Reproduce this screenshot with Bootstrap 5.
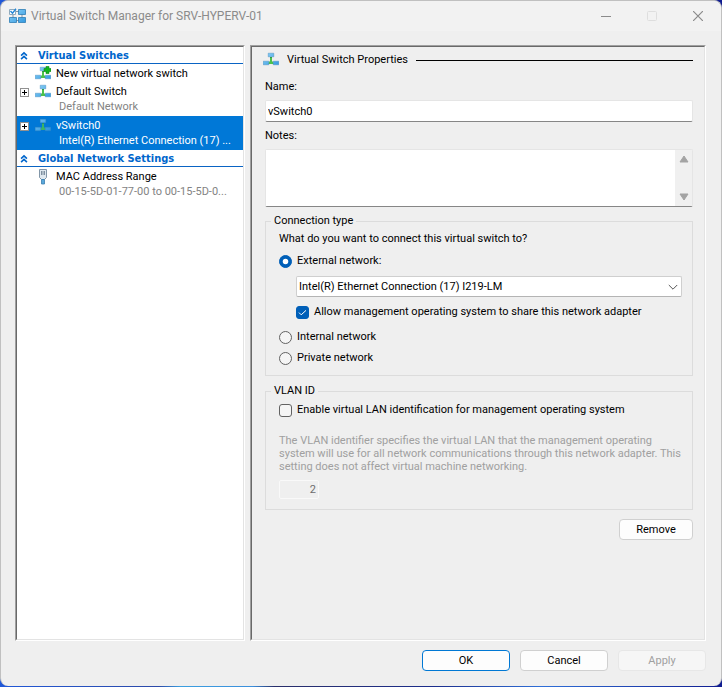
<!DOCTYPE html>
<html lang="en">
<head>
<meta charset="utf-8">
<meta name="viewport" content="width=device-width, initial-scale=1">
<title>Virtual Switch Manager for SRV-HYPERV-01</title>
<link href="https://cdn.jsdelivr.net/npm/bootstrap@5.3.0/dist/css/bootstrap.min.css" rel="stylesheet">
<style>
  body { font-family: Roboto, "Open Sans", sans-serif; font-size: 11px; line-height: 14px; color: #000; background: linear-gradient(90deg, #2058d8, #2d4aa8 22%, #3b9fe0 25%, #3b8fdc 35%, #2a2f6a 38%, #1c2d8c 60%, #2f6fd8 75%, #101c90); }
  .dialog { background: #efefef; border: 1px solid #c0c0c0; border-bottom: 0; border-radius: 8px; margin-bottom: 1px; min-height: calc(100vh - 1px); overflow: hidden; }
  .titlebar { height: 30px; background: #f2f2f2; padding-left: 8px; }
  .titlebar h1 { font: 12px/16px Roboto, "Noto Sans", sans-serif; color: #8b8b8b; margin-left: 5px; }
  .caption-btn { width: 46px; height: 28px; background: none; }
  .work { padding: 14px 15px 0 14px; gap: 5px; }
  .sunken { border: 1px solid; border-color: #a0a0a0 #fff #fff #a0a0a0; }
  .sunken > div { border: 1px solid; border-color: #696969 #e3e3e3 #e3e3e3 #696969; }
  .side { flex: 0 0 230px; min-width: 0; }
  .side > div { background: #fff; }
  .section-head { height: 17px; border-bottom: 1px solid #0a64c4; color: #0066cc; font-family: "DejaVu Sans Condensed", "Noto Sans", sans-serif; font-size: 11px; line-height: 14px; font-weight: 700; padding: 2px 0 0 3px; }
  .section-head svg { margin-right: 10px; }
  .node { padding: 2px 4px 0 3px; }
  .node-line { height: 16px; line-height: 16px; }
  .node-sub { color: #838383; padding: 0 0 0 39px; height: 16px; line-height: 14px; }
  .node.is-current { background: #0078d7; color: #fff; }
  .node.is-current .node-sub { color: #fff; }
  .expander { width: 9px; height: 9px; border: 1px solid #919191; background: #fff; }
  .expander-slot { width: 15px; flex: none; }
  .node-line > svg { flex: none; margin-right: 5px; }
  .props { padding: 0 11px 12px 13px; }
  .props-head { height: 26px; gap: 8px; }
  .props-head svg { margin-left: -2px; }
  .props-head h2 { font-size: 11px; line-height: 14px; }
  .rule { border-top: 1px solid #000; }
  .field-label { margin: 7px 0 6px; }
  .edit { font-size: inherit; line-height: 14px; border: 1px solid #e5e5e5; border-bottom-color: #868686; border-radius: 2px; background: #fff; color: #000; }
  input.edit { height: 22px; padding: 2px; }
  .memo { height: 58px; }
  .memo textarea { resize: none; outline: 0; padding: 2px; overflow: hidden; }
  .memo-scroll { width: 17px; background: #f0f0f0; padding: 5px 0; }
  .groupbox { border: 1px solid #dcdcdc; padding: 0 10px 10px 13px; margin-top: 7px; }
  .groupbox + .groupbox { margin-top: 8px; }
  .groupbox legend { float: none; width: auto; font-size: 11px; line-height: 14px; padding: 0 3px; margin: 0 0 0 -8px; }
  .opt { min-height: 14px; padding: 0; margin: 0; gap: 5px; }
  .opt .form-check-input { width: 13px; height: 13px; margin: 0; float: none; border-color: #626262; background-color: #f5f5f5; flex: none; }
  .opt .form-check-input[type=checkbox] { border-radius: 3px; }
  .opt .form-check-input:checked { background-color: #005fb8; border-color: #005fb8; }
  .opt .form-check-input[type=checkbox]:checked { background-size: 11px; background-image: url("data:image/svg+xml,%3csvg xmlns='http://www.w3.org/2000/svg' viewBox='0 0 11 11'%3e%3cpath d='M2 5.6l2.2 2.2L9 3.4' fill='none' stroke='white'/%3e%3c/svg%3e"); }
  .stack-lg { margin-top: 11px; }
  .stack-md { margin-top: 8px; }
  .stack-sm { margin-top: 7px; }
  .nested { margin-left: 17px; }
  .adapter { font-size: inherit; line-height: 14px; height: 21px; padding: 2px 20px 2px 2px; color: #000; border: 1px solid #cfcfcf; border-bottom-color: #b4b4b4; border-radius: 2px; background: #fff url("data:image/svg+xml,%3csvg xmlns='http://www.w3.org/2000/svg' viewBox='0 0 10 10'%3e%3cpath d='M.8 3l4.2 4.2L9.2 3' fill='none' stroke='%23555'/%3e%3c/svg%3e") no-repeat right 3px center / 10px 10px; }
  .vlan-opt { margin-top: 5px; }
  .hint { color: #a0a0a0; line-height: 13px; max-width: 403px; margin: 17px 0 7px; }
  input.vlan { width: 40px; height: 19px; border-color: #f9f9f9; background: #efefef; color: #6d6d6d; text-align: right; }
  .push { --bs-btn-font-size: 11px; --bs-btn-line-height: 14px; --bs-btn-padding-x: 0; --bs-btn-padding-y: 2px; --bs-btn-border-radius: 4px; --bs-btn-color: #000; --bs-btn-bg: #fdfdfd; --bs-btn-border-color: #d0d0d0; --bs-btn-hover-bg: #e5f1fb; --bs-btn-hover-color: #000; --bs-btn-disabled-color: #a0a0a0; --bs-btn-disabled-bg: #f6f6f6; --bs-btn-disabled-border-color: #e7e7e7; --bs-btn-disabled-opacity: 1; width: 88px; height: 21px; }
  .push.is-default { --bs-btn-border-color: #0078d4; }
  .push.remove { width: 74px; margin-top: 9px; }
  .actions { padding: 9px 15px 15px; gap: 10px; }
</style>
<script src="https://cdn.jsdelivr.net/npm/bootstrap@5.3.0/dist/js/bootstrap.bundle.min.js"></script>
</head>
<body>
<svg class="position-absolute" width="0" height="0" aria-hidden="true">
  <defs>
    <linearGradient id="blue" x1="0" y1="0" x2="1" y2="1"><stop offset="0" stop-color="#8fd3f8"/><stop offset="1" stop-color="#3399e0"/></linearGradient>
    <symbol id="net" viewBox="0 0 16 16">
      <path d="M7 5h2v4l2 2v1H5v-1l2-2z" fill="#4cc24a"/>
      <path d="M7 5h2v1H7z" fill="#2f9d3a"/>
      <g fill="url(#blue)" stroke="#3d83b5" stroke-width=".4"><path d="M5.200 1.200h5.600v3.600H5.200zM.2 9.200h5.600v3.600H.2zM10.200 9.200h5.600v3.600h-5.600z"/></g>
    </symbol>
    <symbol id="chev" viewBox="0 0 9 10"><path d="M1.200 4.500l3.300-3 3.300 3M1.200 8.500l3.300-3 3.300 3" fill="none" stroke="#0066cc" stroke-width="1.800"/></symbol>
  </defs>
</svg>
<div class="dialog d-flex flex-column">
  <header class="titlebar d-flex align-items-center">
    <svg width="17" height="16" viewBox="0 0 17 16" aria-hidden="true">
      <path d="M4 6v5M13 6v5M6 3.500h5M6 12.500h5" stroke="#8295a5"/>
      <path d="M.5 1.500h6v5h-6z" fill="#fff" stroke="#8faabd"/>
      <g fill="url(#blue)" stroke="#2f7eb5" stroke-width=".8"><path d="M9.500 1.500h7v5h-7zM.5 9.500h7v5h-7zM9.500 9.500h7v5h-7z"/></g>
      <path d="M1.500 3l2 2.200L7 .7" fill="none" stroke="#2487d8" stroke-width="1.400"/>
    </svg>
    <h1 class="mb-0 me-auto">Virtual Switch Manager for SRV-HYPERV-01</h1>
    <button class="caption-btn border-0 p-0" aria-label="Minimize"><svg width="10" height="10"><path d="M0 5.500h10" stroke="#8b8b8b"/></svg></button>
    <button class="caption-btn border-0 p-0" aria-label="Maximize" disabled><svg width="10" height="10"><rect x=".5" y=".5" width="9" height="9" rx="1" fill="none" stroke="#dedede"/></svg></button>
    <button class="caption-btn border-0 p-0" aria-label="Close"><svg width="10" height="10"><path d="M0 0l10 10M10 0L0 10" stroke="#8b8b8b" stroke-width="1.200"/></svg></button>
  </header>

  <main class="work d-flex flex-grow-1">
    <nav class="side sunken d-flex" aria-label="Virtual switches">
      <div class="w-100">
        <h2 class="section-head d-flex align-items-center mb-0"><svg width="8" height="10"><use href="#chev"/></svg>Virtual Switches</h2>
        <ul class="list-unstyled mb-0">
          <li class="node">
            <div class="node-line d-flex align-items-center"><span class="expander-slot"></span>
              <svg width="16" height="16" viewBox="0 0 16 16" aria-hidden="true"><use href="#net" width="16" height="16"/><path d="M11 .5h3v2h2v3h-2v2h-3v-2H9v-3h2z" fill="#12b51e" stroke="#0b8a16" stroke-width=".6"/></svg>
              <span>New virtual network switch</span></div>
          </li>
          <li class="node">
            <div class="node-line d-flex align-items-center"><span class="expander-slot d-flex"><button class="expander p-0 d-flex" aria-label="Expand Default Switch"><svg width="7" height="7"><path d="M1 3.500h5M3.500 1v5" stroke="#000"/></svg></button></span>
              <svg width="16" height="16" aria-hidden="true"><use href="#net"/></svg>
              <span>Default Switch</span></div>
            <div class="node-sub text-nowrap">Default Network</div>
          </li>
          <li class="node is-current">
            <div class="node-line d-flex align-items-center"><span class="expander-slot d-flex"><button class="expander p-0 d-flex" aria-label="Expand vSwitch0"><svg width="7" height="7"><path d="M1 3.500h5M3.500 1v5" stroke="#000"/></svg></button></span>
              <svg width="16" height="16" opacity=".8" aria-hidden="true"><use href="#net"/></svg>
              <span>vSwitch0</span></div>
            <div class="node-sub text-nowrap">Intel(R) Ethernet Connection (17) ...</div>
          </li>
        </ul>
        <h2 class="section-head d-flex align-items-center mb-0"><svg width="8" height="10"><use href="#chev"/></svg>Global Network Settings</h2>
        <ul class="list-unstyled mb-0">
          <li class="node">
            <div class="node-line d-flex align-items-center"><span class="expander-slot"></span>
              <svg width="16" height="16" viewBox="0 0 16 16" aria-hidden="true"><path d="M4.500.5h7v8l-2 2h-3l-2-2z" fill="#dfe8ef" stroke="#8296a8"/><path d="M6.500 2v4M8 2v4M9.500 2v4" stroke="#66798c" stroke-width=".8"/><path d="M6.500 10.500h3V15h-3z" fill="#5aa9dc" stroke="#3c7fae" stroke-width=".8"/></svg>
              <span>MAC Address Range</span></div>
            <div class="node-sub text-nowrap">00-15-5D-01-77-00 to 00-15-5D-0...</div>
          </li>
        </ul>
      </div>
    </nav>

    <section class="sunken flex-grow-1 d-flex">
      <div class="props w-100">
        <div class="props-head d-flex align-items-center">
          <svg width="16" height="16" aria-hidden="true"><use href="#net"/></svg>
          <h2 class="mb-0 fw-normal">Virtual Switch Properties</h2>
          <div class="rule flex-grow-1"></div>
        </div>
        <label class="field-label d-block" for="name">Name:</label>
        <input class="edit d-block w-100" id="name" type="text" value="vSwitch0">
        <label class="field-label d-block" for="notes">Notes:</label>
        <div class="edit memo d-flex">
          <textarea class="flex-grow-1 border-0" id="notes"></textarea>
          <div class="memo-scroll d-flex flex-column justify-content-between align-items-center" aria-hidden="true">
            <svg width="10" height="8"><path d="M5 1l4 6H1z" fill="#a3a3a3" stroke="#a3a3a3" stroke-linejoin="round"/></svg>
            <svg width="10" height="8"><path d="M1 1h8L5 7z" fill="#a3a3a3" stroke="#a3a3a3" stroke-linejoin="round"/></svg>
          </div>
        </div>

        <fieldset class="groupbox">
          <legend>Connection type</legend>
          <div class="pt-1">What do you want to connect this virtual switch to?</div>
          <div class="opt form-check d-flex align-items-center stack-md"><input class="form-check-input" type="radio" name="conn" id="ext" checked><label for="ext">External network:</label></div>
          <div class="nested stack-md">
            <select class="adapter form-select" aria-label="Network adapter"><option>Intel(R) Ethernet Connection (17) I219-LM</option></select>
            <div class="opt form-check d-flex align-items-center stack-md"><input class="form-check-input" type="checkbox" id="share" checked><label for="share">Allow management operating system to share this network adapter</label></div>
          </div>
          <div class="opt form-check d-flex align-items-center stack-lg"><input class="form-check-input" type="radio" name="conn" id="int"><label for="int">Internal network</label></div>
          <div class="opt form-check d-flex align-items-center stack-sm"><input class="form-check-input" type="radio" name="conn" id="priv"><label for="priv">Private network</label></div>
        </fieldset>

        <fieldset class="groupbox">
          <legend>VLAN ID</legend>
          <div class="opt form-check d-flex align-items-center vlan-opt"><input class="form-check-input" type="checkbox" id="vlan"><label for="vlan">Enable virtual LAN identification for management operating system</label></div>
          <p class="hint">The VLAN identifier specifies the virtual LAN that the management operating system will use for all network communications through this network adapter. This setting does not affect virtual machine networking.</p>
          <input class="edit vlan d-block" type="text" value="2" aria-label="VLAN identifier" disabled>
        </fieldset>
        <div class="d-flex justify-content-end"><button class="btn push remove">Remove</button></div>
      </div>
    </section>
  </main>

  <footer class="actions d-flex justify-content-end">
    <button class="btn push is-default">OK</button>
    <button class="btn push">Cancel</button>
    <button class="btn push" disabled>Apply</button>
  </footer>
</div>
</body>
</html>
